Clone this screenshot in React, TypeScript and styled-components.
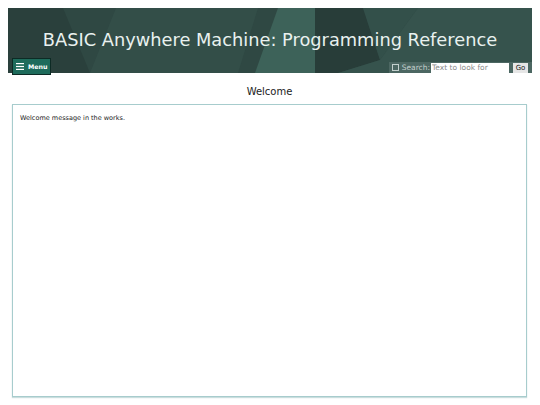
import { FC } from "react";
import styled, { createGlobalStyle } from "styled-components";

const GlobalStyle = createGlobalStyle`
  html, body {
    margin: 0;
    padding: 0;
    background: #ffffff;
    font-family: "DejaVu Sans", Verdana, sans-serif;
  }
`;

const HeaderArt: FC = () => (
  <ArtSvg viewBox="0 0 524 65" preserveAspectRatio="none">
    <rect x="0" y="0" width="524" height="65" fill="#2f4843" />
    <polygon points="0,0 55,0 82,65 0,65" fill="#2a403c" />
    <polygon points="82,65 108,0 250,0 230,65" fill="#334e48" />
    <polygon points="247,65 270,0 307,0 307,65" fill="#3d6259" />
    <polygon points="307,0 355,0 372,52 330,65 307,65" fill="#283d39" />
    <polygon points="355,0 410,0 372,52" fill="#33504a" />
    <polygon points="410,0 524,0 524,65 330,65 372,52" fill="#36534d" />
  </ArtSvg>
);

const App: FC = () => {
  return (
    <Page>
      <GlobalStyle />
      <Header>
        <HeaderArt />
        <Title>BASIC Anywhere Machine: Programming Reference</Title>
        <HeaderBar>
          <MenuButton>
            <MenuIcon width="8" height="7" viewBox="0 0 8 7">
              <rect x="0" y="0" width="8" height="1.2" fill="#fff" />
              <rect x="0" y="2.9" width="8" height="1.2" fill="#fff" />
              <rect x="0" y="5.8" width="8" height="1.2" fill="#fff" />
            </MenuIcon>
            Menu
          </MenuButton>
          <SearchPanel>
            <CheckBox />
            <SearchLabel>Search:</SearchLabel>
            <SearchInput placeholder="Text to look for" />
            <GoButton>Go</GoButton>
          </SearchPanel>
        </HeaderBar>
      </Header>
      <Main>
        <Heading>Welcome</Heading>
        <ContentBox>Welcome message in the works.</ContentBox>
      </Main>
    </Page>
  );
};

export default App;

const Page = styled.div`
  padding: 8px;
  width: 540px;
  height: 405px;
  box-sizing: border-box;
`;

const Header = styled.header`
  position: relative;
  width: 524px;
  height: 65px;
  display: flex;
  flex-direction: column;
  box-sizing: border-box;
`;

const ArtSvg = styled.svg`
  position: absolute;
  inset: 0;
  width: 100%;
  height: 100%;
`;

const Title = styled.h1`
  position: relative;
  margin: 0;
  padding-top: 21px;
  height: 31px;
  text-align: center;
  font-size: 17.8px;
  font-weight: normal;
  color: #e9f1ef;
  line-height: 22px;
`;

const HeaderBar = styled.div`
  position: relative;
  flex: 1;
  display: flex;
  align-items: flex-end;
  justify-content: space-between;
  padding-left: 4px;
`;

const MenuButton = styled.button`
  display: flex;
  align-items: center;
  gap: 4px;
  margin-bottom: -2px;
  height: 17px;
  padding: 0 2px 0 3px;
  box-sizing: border-box;
  background: #1e6b5b;
  border: 1px solid #0d2b25;
  color: #ffffff;
  font-family: "DejaVu Sans", Verdana, sans-serif;
  font-size: 6.3px;
  font-weight: bold;
  white-space: nowrap;
`;

const MenuIcon = styled.svg`
  flex-shrink: 0;
`;

const SearchPanel = styled.div`
  display: flex;
  align-items: center;
  height: 11px;
  padding: 0 4px 0 3px;
  background: #4c6762;
  font-size: 7.5px;
  color: #c3d0cd;
`;

const CheckBox = styled.span`
  width: 5px;
  height: 5px;
  border: 1px solid #c3d0cd;
  margin-right: 3px;
`;

const SearchLabel = styled.span`
  margin-right: 1px;
`;

const SearchInput = styled.input`
  width: 78px;
  height: 10px;
  padding: 0 1px;
  box-sizing: border-box;
  border: none;
  background: #ffffff;
  font-family: "DejaVu Sans", Verdana, sans-serif;
  font-size: 7.5px;
  margin-right: 4px;

  &::placeholder {
    color: #8a8a8a;
  }
`;

const GoButton = styled.button`
  height: 10px;
  width: 15px;
  padding: 0;
  border: none;
  background: #e6e6e6;
  color: #222;
  font-family: "DejaVu Sans", Verdana, sans-serif;
  font-size: 7px;
  line-height: 10px;
`;

const Main = styled.main`
  padding: 0 5px 0 4px;
`;

const Heading = styled.h2`
  margin: 0;
  padding-top: 13px;
  height: 31px;
  box-sizing: border-box;
  text-align: center;
  font-size: 10px;
  font-weight: normal;
  color: #222;
`;

const ContentBox = styled.div`
  height: 293px;
  box-sizing: border-box;
  border: 1px solid #a7cccd;
  box-shadow: 0 1px 1px rgba(150, 190, 190, 0.5);
  padding: 9px 7px;
  font-size: 6.5px;
  color: #222;
`;
